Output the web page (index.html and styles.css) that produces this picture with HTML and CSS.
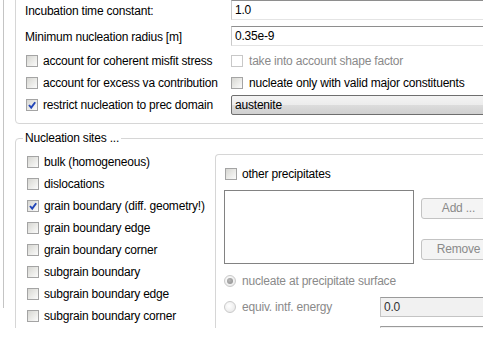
FILE: index.html
```html
<!DOCTYPE html>
<html>
<head>
<meta charset="utf-8">
<link rel="stylesheet" href="styles.css">
</head>
<body>
<div class="viewport">
  <div class="panel">
    <div class="group top-group">
      <div class="fields">
        <div class="row">
          <span class="label">Incubation time constant:</span>
          <div class="input">1.0</div>
        </div>
        <div class="row">
          <span class="label">Minimum nucleation radius [m]</span>
          <div class="input">0.35e-9</div>
        </div>
      </div>
      <div class="row">
        <div class="check"><span class="cb"></span>account for coherent misfit stress</div>
        <div class="check disabled"><span class="cb"></span>take into account shape factor</div>
      </div>
      <div class="row">
        <div class="check"><span class="cb"></span>account for excess va contribution</div>
        <div class="check"><span class="cb"></span>nucleate only with valid major constituents</div>
      </div>
      <div class="row">
        <div class="check"><span class="cb checked"><svg viewBox="0 0 10 10" width="10" height="10"><path d="M2 5 L4.2 7.6 L8.2 2.2" fill="none" stroke="#2346b8" stroke-width="1.9"/></svg></span>restrict nucleation to prec domain</div>
        <div class="combo">austenite</div>
      </div>
    </div>

    <fieldset class="sites">
      <legend>Nucleation sites ...</legend>
      <div class="sites-body">
        <div class="site-list">
          <div class="check"><span class="cb"></span>bulk (homogeneous)</div>
          <div class="check"><span class="cb"></span>dislocations</div>
          <div class="check"><span class="cb checked"><svg viewBox="0 0 10 10" width="10" height="10"><path d="M2 5 L4.2 7.6 L8.2 2.2" fill="none" stroke="#2346b8" stroke-width="1.9"/></svg></span>grain boundary (diff. geometry!)</div>
          <div class="check"><span class="cb"></span>grain boundary edge</div>
          <div class="check"><span class="cb"></span>grain boundary corner</div>
          <div class="check"><span class="cb"></span>subgrain boundary</div>
          <div class="check"><span class="cb"></span>subgrain boundary edge</div>
          <div class="check"><span class="cb"></span>subgrain boundary corner</div>
        </div>
        <div class="group prec-group">
          <div class="check"><span class="cb"></span>other precipitates</div>
          <div class="list-row">
            <div class="listbox"></div>
            <div class="buttons">
              <div class="btn">Add ...</div>
              <div class="btn">Remove</div>
            </div>
          </div>
          <div class="radio-row first">
            <div class="radio-label"><span class="radio checked"></span>nucleate at precipitate surface</div>
          </div>
          <div class="radio-row">
            <div class="radio-label"><span class="radio"></span>equiv. intf. energy</div>
            <div class="input off">0.0</div>
          </div>
          <div class="radio-row last">
            <div class="radio-label"></div>
            <div class="input off"></div>
          </div>
        </div>
      </div>
    </fieldset>
  </div>
</div>
</body>
</html>
```

FILE: styles.css
```css
* { box-sizing: border-box; }

body {
  margin: 0;
  background: #fff;
  font-family: "Liberation Sans", Arial, sans-serif;
  font-size: 12px;
  letter-spacing: -0.2px;
  color: #000;
}

.viewport {
  width: 483px;
  height: 328px;
  overflow: hidden;
}

.panel {
  margin-left: 3px;
  height: 100%;
  border-left: 1px solid #c4c4c4;
  padding-left: 11px;
}

.group {
  border: 1px solid #d6d6d6;
  border-radius: 4px;
}

.top-group {
  width: 490px;
  margin-top: -20px;
  padding: 19px 0 8px 9px;
  display: flex;
  flex-direction: column;
  gap: 2px;
}

.fields {
  display: flex;
  flex-direction: column;
  gap: 6px;
  margin-bottom: 3px;
}

.row {
  display: grid;
  grid-template-columns: 206px 1fr;
  align-items: center;
  height: 20px;
}

.label { padding-top: 1px; }

.input {
  height: 20px;
  border: 1px solid #c9c9c9;
  border-top-color: #8e8e8e;
  border-bottom-color: #e4e4e4;
  background: #fff;
  padding: 2px 3px 0 3px;
  line-height: 15px;
}

.input.off {
  background: #f1f1f1;
  border-color: #c4c4c4;
  border-top-color: #9a9a9a;
  color: #333;
}

.check {
  display: flex;
  align-items: center;
  height: 20px;
  white-space: nowrap;
}

.cb {
  width: 12px;
  height: 12px;
  flex: none;
  margin: 0 5px 0 1px;
  border: 1px solid #a4a4a4;
  background: linear-gradient(135deg, #d6d6d2 0%, #e9e9e6 50%, #fbfbfb 100%);
  display: flex;
  align-items: center;
  justify-content: center;
}

.row > .check:nth-child(2) .cb { margin-left: 0; margin-right: 6px; }

.check.disabled { color: #8a8a8a; }
.check.disabled .cb {
  background: #fff;
  border-color: #c8c8c8;
}

.combo {
  height: 20px;
  border: 1px solid #6e6e6e;
  border-radius: 2px;
  background: linear-gradient(#f4f4f4 0%, #ececec 50%, #dcdcdc 51%, #d0d0d0 100%);
  padding: 2px 3px 0 3px;
  line-height: 15px;
}

.sites {
  width: 490px;
  margin: 7px 0 0 0;
  padding: 7px 0 0 7px;
  border: 1px solid #d6d6d6;
  border-radius: 4px;
  min-inline-size: 0;
}

.sites legend {
  padding: 0 2px;
  line-height: 14px;
}

.sites-body {
  display: flex;
  align-items: flex-start;
}

.site-list {
  width: 192px;
  flex: none;
  padding-left: 3px;
  display: flex;
  flex-direction: column;
  gap: 2px;
}

.prec-group {
  flex: 1;
  margin-top: 2px;
  padding: 9px 0 0 8px;
  border-bottom: none;
  height: 200px;
}

.prec-group .cb { margin-left: 1px; }

.list-row {
  display: flex;
  margin-top: 6px;
}

.listbox {
  width: 190px;
  height: 74px;
  border: 1px solid #828282;
  background: #fff;
}

.buttons {
  display: flex;
  flex-direction: column;
  gap: 20px;
  margin-left: 7px;
  padding-top: 8px;
}

.btn {
  width: 75px;
  height: 21px;
  border: 1px solid #c3c3c3;
  border-radius: 3px;
  background: #f4f4f4;
  color: #8a8a8a;
  text-align: center;
  line-height: 19px;
}

.radio-row {
  display: grid;
  grid-template-columns: 156px 1fr;
  align-items: center;
  height: 20px;
  margin-top: 6px;
}
.radio-row.first { margin-top: 7px; }
.radio-row.last { margin-top: 9px; }

.radio-label {
  display: flex;
  align-items: center;
  color: #8a8a8a;
  white-space: nowrap;
}

.radio {
  width: 12px;
  height: 12px;
  flex: none;
  margin-right: 6px;
  border-radius: 50%;
  border: 1px solid #cacaca;
  background: radial-gradient(circle at 40% 40%, #ffffff 0%, #ececec 70%, #dedede 100%);
  display: flex;
  align-items: center;
  justify-content: center;
}

.radio.checked::after {
  content: "";
  width: 6px;
  height: 6px;
  border-radius: 50%;
  background: radial-gradient(circle at 40% 40%, #b8b8b8, #8a8a8a);
}
```
